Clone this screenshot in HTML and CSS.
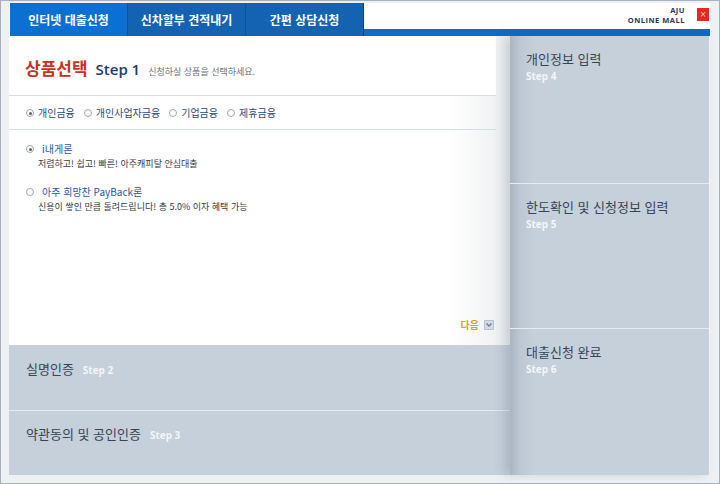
FILE: index.html
```html
<!DOCTYPE html>
<html lang="ko">
<head>
    <meta charset="UTF-8">
    <title>인터넷 대출신청</title>
    <link rel="stylesheet" href="styles.css">
</head>
<body>
    <div class="frame">
        <div class="header">
            <div class="tabs">
                <div class="tab active">인터넷 대출신청</div>
                <div class="tab">신차할부 견적내기</div>
                <div class="tab">간편 상담신청</div>
            </div>
            <div class="header-right">
                <div class="brand-row">
                    <div class="brand">
                        <div>AJU</div>
                        <div>ONLINE MALL</div>
                    </div>
                    <div class="close">×</div>
                </div>
                <div class="bar"></div>
            </div>
        </div>

        <div class="body">
            <div class="left">
                <div class="step-open">
                    <div class="title-row">
                        <span class="title-ko">상품선택</span>
                        <span class="title-step">Step 1</span>
                        <span class="title-desc">신청하실 상품을 선택하세요.</span>
                    </div>
                    <div class="category-row">
                        <label class="radio"><span class="dot checked"></span>개인금융</label>
                        <label class="radio"><span class="dot"></span>개인사업자금융</label>
                        <label class="radio"><span class="dot"></span>기업금융</label>
                        <label class="radio"><span class="dot"></span>제휴금융</label>
                    </div>
                    <div class="products">
                        <div class="product">
                            <div class="product-name"><span class="dot checked"></span>i내게론</div>
                            <div class="product-desc">저렴하고! 쉽고! 빠른! 아주캐피탈 안심대출</div>
                        </div>
                        <div class="product">
                            <div class="product-name"><span class="dot"></span>아주 희망찬 PayBack론</div>
                            <div class="product-desc">신용이 쌓인 만큼 돌려드립니다! 총 5.0% 이자 혜택 가능</div>
                        </div>
                    </div>
                    <div class="next-row">
                        <span class="next">다음</span>
                        <span class="next-icon">
                            <svg width="8" height="8" viewBox="0 0 8 8"><path d="M1.5 2.5 L4 5 L6.5 2.5" fill="none" stroke="#6c7a8c" stroke-width="1.3"/></svg>
                        </span>
                    </div>
                </div>
                <div class="step-closed">
                    <span class="step-ko">실명인증</span>
                    <span class="step-en">Step 2</span>
                </div>
                <div class="step-closed">
                    <span class="step-ko">약관동의 및 공인인증</span>
                    <span class="step-en">Step 3</span>
                </div>
            </div>

            <div class="right">
                <div class="side-step">
                    <div class="step-ko">개인정보 입력</div>
                    <div class="step-en">Step 4</div>
                </div>
                <div class="side-step">
                    <div class="step-ko">한도확인 및 신청정보 입력</div>
                    <div class="step-en">Step 5</div>
                </div>
                <div class="side-step">
                    <div class="step-ko">대출신청 완료</div>
                    <div class="step-en">Step 6</div>
                </div>
            </div>
        </div>
    </div>
</body>
</html>
```

FILE: styles.css
```css
body {
    margin: 0;
    font-family: "Noto Sans CJK KR", "Noto Sans", sans-serif;
    background-color: #fff;
}

.frame {
    width: 720px;
    height: 484px;
    box-sizing: border-box;
    border: 1px solid #a7b1bd;
    background-color: #eef1f4;
    padding: 2px 9px 8px 8px;
    display: flex;
    flex-direction: column;
}

.header {
    height: 33px;
    display: flex;
    background-color: #fff;
    padding-left: 1px;
}

.tabs {
    display: flex;
}

.tab {
    width: 117px;
    display: flex;
    align-items: center;
    justify-content: center;
    padding-bottom: 1px;
    background-color: #1462b2;
    color: #fff;
    font-size: 12px;
    font-weight: bold;
    border-left: 1px solid #0f5398;
}

.tab.active {
    background-color: #0b70d1;
    border-left: none;
}

.tab:last-child {
    border-right: 1px solid #123f70;
}

.header-right {
    flex: 1;
    display: flex;
    flex-direction: column;
}

.brand-row {
    flex: 1;
    display: flex;
    justify-content: flex-end;
    align-items: flex-start;
    padding-top: 2px;
    gap: 12px;
}

.brand {
    font-family: "Open Sans", sans-serif;
    font-size: 7.5px;
    font-weight: bold;
    line-height: 10px;
    text-align: right;
    color: #2b3752;
    letter-spacing: 0.5px;
}

.close {
    width: 12px;
    height: 13px;
    margin-top: 3px;
    margin-right: 1px;
    background-color: #e02a20;
    color: #ffd8c8;
    font-family: "DejaVu Sans", sans-serif;
    font-size: 8px;
    line-height: 13px;
    text-align: center;
}

.bar {
    height: 7px;
    background-color: #0b6cc9;
}

.body {
    flex: 1;
    display: grid;
    grid-template-columns: 501px 200px;
}

.left {
    display: flex;
    flex-direction: column;
}

.step-open {
    height: 309px;
    box-sizing: border-box;
    background: linear-gradient(to right, #fff 0, #fff 440px, #eceeef 501px);
    display: flex;
    flex-direction: column;
}

.title-row {
    height: 60px;
    box-sizing: border-box;
    padding: 19px 0 0 16px;
    display: flex;
    align-items: baseline;
    border-bottom: 1px solid #d5dde6;
    margin-right: 14px;
    background: linear-gradient(to bottom, #fffdf6 0, #fff 12px);
}

.title-ko {
    color: #c7331f;
    font-size: 17px;
    font-weight: bold;
}

.title-step {
    margin-left: 8px;
    color: #1e3b6c;
    font-family: "Open Sans", sans-serif;
    font-size: 15px;
    font-weight: 600;
}

.title-desc {
    margin-left: 8px;
    color: #6a727c;
    font-size: 9px;
}

.category-row {
    height: 34px;
    box-sizing: border-box;
    margin-right: 14px;
    padding-left: 17px;
    display: flex;
    align-items: center;
    gap: 9px;
    border-bottom: 1px solid #d5dde6;
}

.radio {
    display: flex;
    align-items: center;
    gap: 4px;
    color: #2c4a78;
    font-size: 10px;
}

.dot {
    width: 8px;
    height: 8px;
    border: 1px solid #a0a8b2;
    border-radius: 50%;
    background-color: #fff;
    display: inline-block;
    box-sizing: border-box;
    position: relative;
}

.dot.checked::after {
    content: "";
    position: absolute;
    left: 2px;
    top: 2px;
    width: 3px;
    height: 3px;
    border-radius: 50%;
    background-color: #5a6270;
}

.products {
    padding: 11px 0 0 17px;
    display: flex;
    flex-direction: column;
    gap: 13px;
}

.product-name {
    display: flex;
    align-items: center;
    gap: 8px;
    color: #2a5a9e;
    font-size: 10px;
    line-height: 15px;
}

.product-desc {
    padding-left: 12px;
    color: #333c46;
    font-size: 9px;
    line-height: 15px;
}

.next-row {
    margin-top: auto;
    margin-bottom: 13px;
    padding-right: 16px;
    display: flex;
    justify-content: flex-end;
    align-items: center;
    gap: 5px;
}

.next {
    color: #e6a11c;
    font-size: 10px;
    font-weight: bold;
}

.next-icon {
    width: 10px;
    height: 10px;
    background-color: #d3dae3;
    border: 1px solid #b8c2ce;
    box-sizing: border-box;
    display: flex;
    align-items: center;
    justify-content: center;
}

.step-closed {
    height: 65px;
    box-sizing: border-box;
    background-color: #c5d0db;
    padding: 14px 0 0 17px;
    display: flex;
    align-items: baseline;
    gap: 9px;
}

.step-closed + .step-closed {
    border-top: 1px solid #e6ebf0;
    padding-top: 13px;
}

.step-ko {
    color: #394452;
    font-size: 13px;
}

.step-en {
    color: #f3f6f9;
    font-family: "Open Sans", sans-serif;
    font-size: 10px;
    font-weight: bold;
}

.right {
    display: flex;
    flex-direction: column;
    background-color: #c5d0db;
    box-shadow: -6px 0 10px rgba(60, 70, 85, 0.18);
    border-right: 1px solid #f2f4f7;
}

.side-step {
    height: 147px;
    box-sizing: border-box;
    padding: 13px 0 0 16px;
    background: linear-gradient(to right, #a9b5c1 0, #bcc7d2 10px, #c5d0db 24px);
}

.side-step + .side-step {
    border-top: 1px solid #e6ebf0;
    height: 145px;
}

.side-step:last-child {
    height: 147px;
}

.side-step .step-en {
    margin-top: 1px;
}
```
